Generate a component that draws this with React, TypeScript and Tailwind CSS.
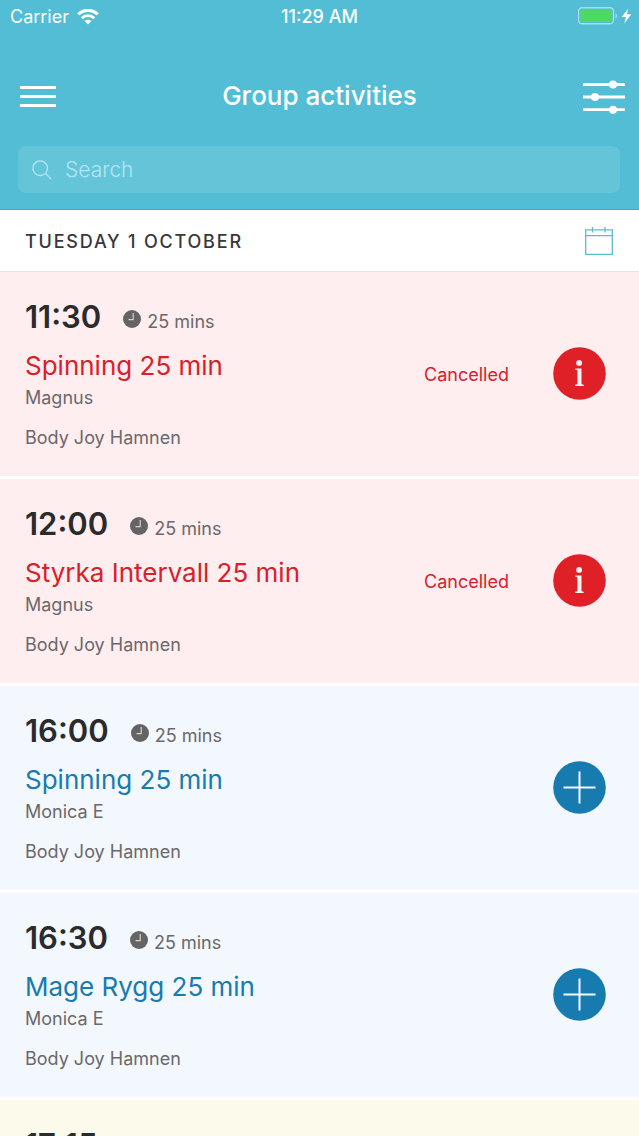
type Tone = "cancelled" | "open" | "waiting";

interface Activity {
  time: string;
  duration: string;
  title: string;
  instructor: string;
  place: string;
  tone: Tone;
}

const activities: Activity[] = [
  { time: "11:30", duration: "25 mins", title: "Spinning 25 min", instructor: "Magnus", place: "Body Joy Hamnen", tone: "cancelled" },
  { time: "12:00", duration: "25 mins", title: "Styrka Intervall 25 min", instructor: "Magnus", place: "Body Joy Hamnen", tone: "cancelled" },
  { time: "16:00", duration: "25 mins", title: "Spinning 25 min", instructor: "Monica E", place: "Body Joy Hamnen", tone: "open" },
  { time: "16:30", duration: "25 mins", title: "Mage Rygg 25 min", instructor: "Monica E", place: "Body Joy Hamnen", tone: "open" },
  { time: "17:15", duration: "", title: "", instructor: "", place: "", tone: "waiting" },
];

const rowTone: Record<Tone, string> = {
  cancelled: "bg-[#feeeef]",
  open: "bg-[#f2f8fd]",
  waiting: "bg-[#fcfaea]",
};

const titleTone: Record<Tone, string> = {
  cancelled: "text-[#d9202a]",
  open: "text-[#187bb0]",
  waiting: "text-[#187bb0]",
};

function WifiIcon() {
  return (
    <svg viewBox="0 0 22 16" className="h-4 w-[22px]" fill="none" aria-hidden="true">
      <path d="M1.200 5.400a13.800 13.800 0 0 1 19.600 0" stroke="white" strokeWidth="3.200" />
      <path d="M4.700 9.200a8.800 8.800 0 0 1 12.600 0" stroke="white" strokeWidth="2.800" />
      <path d="M7.500 12.100a4.900 4.900 0 0 1 7 0L11 15.600z" fill="white" />
    </svg>
  );
}

function BatteryIcon() {
  return (
    <svg viewBox="0 0 56 18" className="h-[18px] w-14" aria-hidden="true">
      <rect x="0.500" y="0.800" width="35" height="16" rx="3.500" fill="none" stroke="#a5def0" strokeWidth="1.400" />
      <rect x="2.200" y="2.500" width="31.600" height="12.600" rx="1.600" fill="#4cd964" />
      <path d="M37.500 6.200c2 .8 2 4.600 0 5.400z" fill="#a5def0" />
      <path d="M50.300 1.400 43.600 9.900h4.200l-1.500 6.600 7-9.300h-4.500z" fill="white" />
    </svg>
  );
}

function MenuIcon() {
  return (
    <svg viewBox="0 0 36 22" className="h-[22px] w-9" aria-hidden="true">
      <path d="M0 1.500h36M0 10.500h36M0 19.500h36" stroke="white" strokeWidth="3" />
    </svg>
  );
}

function FilterIcon() {
  return (
    <svg viewBox="0 0 42 34" className="h-[34px] w-[42px]" aria-hidden="true">
      <path d="M0 4.500h42M0 17h42M0 29.700h42" stroke="white" strokeWidth="2.800" />
      <circle cx="30" cy="4.500" r="4" fill="white" />
      <circle cx="12" cy="17" r="4" fill="white" />
      <circle cx="30" cy="29.700" r="4" fill="white" />
    </svg>
  );
}

function SearchIcon() {
  return (
    <svg viewBox="0 0 20 20" className="size-5 shrink-0" fill="none" stroke="#b5e6f3" strokeWidth="1.300" aria-hidden="true">
      <circle cx="8.200" cy="8.200" r="7.300" />
      <path d="m13.400 13.400 6 6" />
    </svg>
  );
}

function CalendarIcon() {
  return (
    <svg viewBox="0 0 28 28" className="size-7" fill="none" stroke="#5bbdd0" strokeWidth="1.300" aria-hidden="true">
      <path d="M.7 2.800h26.600v24.500H.7zM.7 8.700h26.600M7.500 0v5.500M20 0v5.500" />
    </svg>
  );
}

function ClockIcon() {
  return (
    <svg viewBox="0 0 18 18" className="-mb-px size-[18px]" aria-hidden="true">
      <circle cx="9" cy="9" r="9" fill="#646464" />
      <path d="M10.200 3v6.700H5.500" fill="none" stroke="#d5d0d1" strokeWidth="1.200" />
    </svg>
  );
}

function InfoIcon() {
  return (
    <svg viewBox="0 0 53 53" className="size-[53px]" aria-hidden="true">
      <circle cx="26.500" cy="26.500" r="26.300" fill="#df2027" />
      <circle cx="26.100" cy="15.900" r="2.900" fill="#fff0f0" />
      <path d="M22.300 21.400h6.200v15.900l2.200.4v1.400h-8.600v-1.400l2.300-.4V23.200l-2.100-.4z" fill="#fff0f0" />
    </svg>
  );
}

function PlusIcon() {
  return (
    <svg viewBox="0 0 53 53" className="size-[53px]" aria-hidden="true">
      <circle cx="26.500" cy="26.500" r="26.300" fill="#187bb0" />
      <path d="M26.500 10.500v32M10.500 26.500h32" stroke="#f2fbff" strokeWidth="2" />
    </svg>
  );
}

function ActivityRow({ item }: { item: Activity }) {
  const cancelled = item.tone === "cancelled";
  return (
    <li className={`flex min-h-[207px] shrink-0 items-center border-b-[3px] border-white pr-[33px] pb-0.5 pl-[25px] ${rowTone[item.tone]}`}>
      <div className="min-w-0 flex-1 self-stretch pt-[25px] text-lg leading-6 text-[#6c686a]">
        <div className="flex items-baseline">
          <time className="text-[31px] leading-10 font-semibold text-[#2b2a2c]">{item.time}</time>
          {item.duration && (
            <span className="ml-[22px] flex items-baseline gap-[6px]">
              <ClockIcon />
              {item.duration}
            </span>
          )}
        </div>
        <h2 className={`mt-[13px] text-[26px] leading-8 ${titleTone[item.tone]}`}>{item.title}</h2>
        <p className="mt-1">{item.instructor}</p>
        <p className="mt-4">{item.place}</p>
      </div>
      {cancelled && <span className="mr-11 pt-1 text-lg text-[#d9202a]">Cancelled</span>}
      {item.tone !== "waiting" && (
        <button type="button" className="rounded-full" aria-label={cancelled ? "Information" : "Book"}>
          {cancelled ? <InfoIcon /> : <PlusIcon />}
        </button>
      )}
    </li>
  );
}

export default function App() {
  return (
    <div className="flex h-screen flex-col bg-white font-['Inter','Liberation_Sans',sans-serif]">
      <header className="border-b border-[#46adc3] bg-[#52bdd4] text-white">
        <div className="grid h-[34px] grid-cols-[1fr_auto_1fr] items-center px-[10px] text-lg">
          <div className="flex items-center gap-2">
            Carrier
            <WifiIcon />
          </div>
          <span className="font-medium">11:29 AM</span>
          <div className="-mr-[5px] flex justify-end pb-0.5">
            <BatteryIcon />
          </div>
        </div>
        <div className="grid grid-cols-[1fr_auto_1fr] items-center px-[14px] pt-11 pb-[30px]">
          <button type="button" className="ml-[6px] justify-self-start" aria-label="Menu">
            <MenuIcon />
          </button>
          <h1 className="pb-0.5 text-[26px] leading-9 font-medium">Group activities</h1>
          <button type="button" className="justify-self-end" aria-label="Filter">
            <FilterIcon />
          </button>
        </div>
        <label className="mr-[19px] mb-4 ml-[18px] flex h-[47px] items-center gap-[13px] rounded-lg bg-[#64c5d9] px-[14px] pt-px">
          <SearchIcon />
          <input
            type="text"
            placeholder="Search"
            aria-label="Search"
            className="min-w-0 flex-1 bg-transparent text-[21px] font-light outline-none placeholder:text-[#b5e6f3]"
          />
        </label>
      </header>
      <div className="flex h-[62px] shrink-0 items-center justify-between border-b border-[#eedfe1] pr-[26px] pl-[25px]">
        <span className="pt-0.5 text-lg font-medium tracking-widest text-[#38373c]">TUESDAY 1 OCTOBER</span>
        <button type="button" aria-label="Calendar">
          <CalendarIcon />
        </button>
      </div>
      <ul className="flex min-h-0 flex-1 flex-col overflow-y-auto [scrollbar-width:none]">
        {activities.map((item) => (
          <ActivityRow key={item.time} item={item} />
        ))}
      </ul>
    </div>
  );
}
